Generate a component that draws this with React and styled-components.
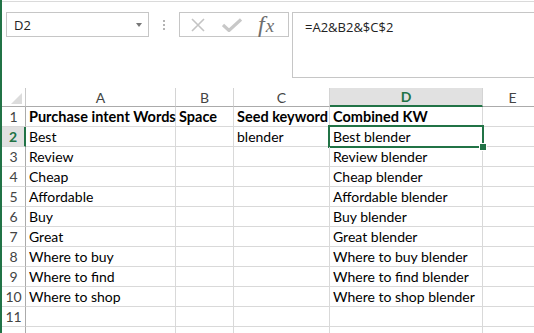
import React from "react";
import styled, { createGlobalStyle, css } from "styled-components";

const GREEN = "#217346";
const GRID = "#d9d9d9";

const GlobalStyle = createGlobalStyle`
  html, body {
    margin: 0;
    padding: 0;
    background: #fff;
    overflow: hidden;
  }
`;

const columns = [
  { key: "A", width: 150 },
  { key: "B", width: 58 },
  { key: "C", width: 96 },
  { key: "D", width: 153 },
  { key: "E", width: 60 },
];

const words = [
  "Best",
  "Review",
  "Cheap",
  "Affordable",
  "Buy",
  "Great",
  "Where to buy",
  "Where to find",
  "Where to shop",
];

// row 1 headers, rows 2-10 values, row 11 empty, row 12 only peeks in at the bottom
const rows = [
  { A: "Purchase intent Words", B: "Space", C: "Seed keyword", D: "Combined KW", bold: true },
  ...words.map((w, i) => ({
    A: w,
    B: "",
    C: i === 0 ? "blender" : "",
    D: `${w} blender`,
  })),
  {},
  { hideLabel: true },
];

export default function App() {
  return (
    <>
      <GlobalStyle />
      <Window>
        <FormulaBar>
          <NameBox>
            <span>D2</span>
            <Caret />
          </NameBox>
          <Grip>
            <i />
            <i />
            <i />
          </Grip>
          <FxBox>
            <svg width="16" height="16" viewBox="0 0 16 16">
              <path d="M2 2 L14 14 M14 2 L2 14" stroke="#c4c4c4" strokeWidth="1.6" fill="none" />
            </svg>
            <svg width="20" height="14" viewBox="0 0 20 14">
              <path d="M1 7 L7 12.5 L19 1.5" stroke="#c8c8c8" strokeWidth="3.2" fill="none" />
            </svg>
            <Fx>
              f<span>x</span>
            </Fx>
          </FxBox>
          <FormulaInput>=A2&amp;B2&amp;$C$2</FormulaInput>
        </FormulaBar>

        <Sheet>
          <Corner />
          {columns.map((c) => (
            <ColHead key={c.key} $active={c.key === "D"}>
              {c.key}
            </ColHead>
          ))}
          {rows.map((r, i) => (
            <React.Fragment key={i}>
              <RowHead $active={i === 1}>{r.hideLabel ? "" : i + 1}</RowHead>
              {columns.map((c) => (
                <Cell key={c.key} $bold={r.bold} $selected={i === 1 && c.key === "D"}>
                  {r[c.key]}
                </Cell>
              ))}
            </React.Fragment>
          ))}
        </Sheet>
      </Window>
    </>
  );
}

const Window = styled.div`
  width: 532px;
  height: 333px;
  border-left: 2px solid ${GREEN};
  overflow: hidden;
  display: flex;
  flex-direction: column;
  font-family: "Open Sans", "Noto Sans", sans-serif;
`;

const FormulaBar = styled.div`
  flex-shrink: 0;
  height: 87px;
  margin-top: 1px;
  border-top: 1px solid #dadada;
  display: flex;
  align-items: flex-start;
  padding: 10px 0 0 4px;
  box-sizing: border-box;
`;

const boxed = css`
  box-sizing: border-box;
  border: 1px solid #c6c6c6;
  background: #fff;
`;

const NameBox = styled.div`
  ${boxed};
  width: 143px;
  height: 25px;
  display: flex;
  align-items: center;
  justify-content: space-between;
  padding: 0 6px 0 7px;
  font-size: 13px;
  color: #222;
`;

const Caret = styled.div`
  width: 0;
  height: 0;
  border-left: 3.5px solid transparent;
  border-right: 3.5px solid transparent;
  border-top: 4px solid #777;
  margin-top: 1px;
`;

const Grip = styled.div`
  width: 30px;
  height: 25px;
  display: flex;
  flex-direction: column;
  align-items: center;
  justify-content: center;
  gap: 2px;

  i {
    width: 2px;
    height: 2px;
    background: #b4b4b4;
  }
`;

const FxBox = styled.div`
  ${boxed};
  width: 110px;
  height: 25px;
  display: flex;
  align-items: center;
  padding: 0 0 0 10px;
  gap: 16px;
`;

const Fx = styled.div`
  font-family: "Liberation Serif", "DejaVu Serif", serif;
  font-style: italic;
  font-size: 24px;
  color: #6e6e6e;
  line-height: 1;
  margin: -2px 0 0 0;

  span {
    font-size: 19px;
    margin-left: 1px;
  }
`;

const FormulaInput = styled.div`
  ${boxed};
  flex: 1;
  height: 66px;
  margin-left: 3px;
  border-right: none;
  padding: 5px 12px;
  font-size: 13px;
  color: #222;
`;

const Sheet = styled.div`
  flex-shrink: 0;
  display: grid;
  grid-template-columns: 24px ${columns.map((c) => `${c.width}px`).join(" ")};
  grid-template-rows: 19px;
  grid-auto-rows: 20px;
  font-family: Lato, "Liberation Sans", sans-serif;
`;

const Corner = styled.div`
  position: relative;
  border-right: 1px solid #c8c8c8;
  border-bottom: 1px solid #ababab;

  &::after {
    content: "";
    position: absolute;
    right: 3px;
    bottom: 2px;
    width: 0;
    height: 0;
    border-left: 11px solid transparent;
    border-bottom: 11px solid #dcdcdc;
  }
`;

const ColHead = styled.div`
  box-sizing: border-box;
  display: flex;
  align-items: center;
  justify-content: center;
  font-size: 14px;
  color: #444;
  border-right: 1px solid #d4d4d4;
  border-bottom: 1px solid #ababab;
  ${(p) =>
    p.$active &&
    css`
      background: #e1e1e1;
      color: ${GREEN};
      font-weight: 700;
      border-bottom: 2px solid ${GREEN};
    `}
`;

const RowHead = styled.div`
  box-sizing: border-box;
  display: flex;
  align-items: flex-end;
  justify-content: center;
  padding-bottom: 1px;
  font-size: 14px;
  color: #444;
  border-right: 1px solid #ababab;
  border-bottom: 1px solid ${GRID};
  ${(p) =>
    p.$active &&
    css`
      background: #e1e1e1;
      color: ${GREEN};
      font-weight: 700;
      border-right: 2px solid ${GREEN};
    `}
`;

const Cell = styled.div`
  position: relative;
  box-sizing: border-box;
  display: flex;
  align-items: flex-end;
  padding: 0 0 1px 3px;
  font-size: ${(p) => (p.$bold ? "14.5px" : "14px")};
  color: #000;
  white-space: nowrap;
  font-weight: ${(p) => (p.$bold ? 700 : 400)};
  border-right: 1px solid ${GRID};
  border-bottom: 1px solid ${GRID};

  ${(p) =>
    p.$selected &&
    css`
      &::after {
        content: "";
        position: absolute;
        left: -2px;
        top: -2px;
        right: -2px;
        bottom: -2px;
        border: 2px solid ${GREEN};
        pointer-events: none;
      }
      &::before {
        content: "";
        position: absolute;
        right: -5px;
        bottom: -5px;
        width: 6px;
        height: 6px;
        background: ${GREEN};
        border: 1px solid #fff;
        z-index: 2;
      }
    `}
`;
